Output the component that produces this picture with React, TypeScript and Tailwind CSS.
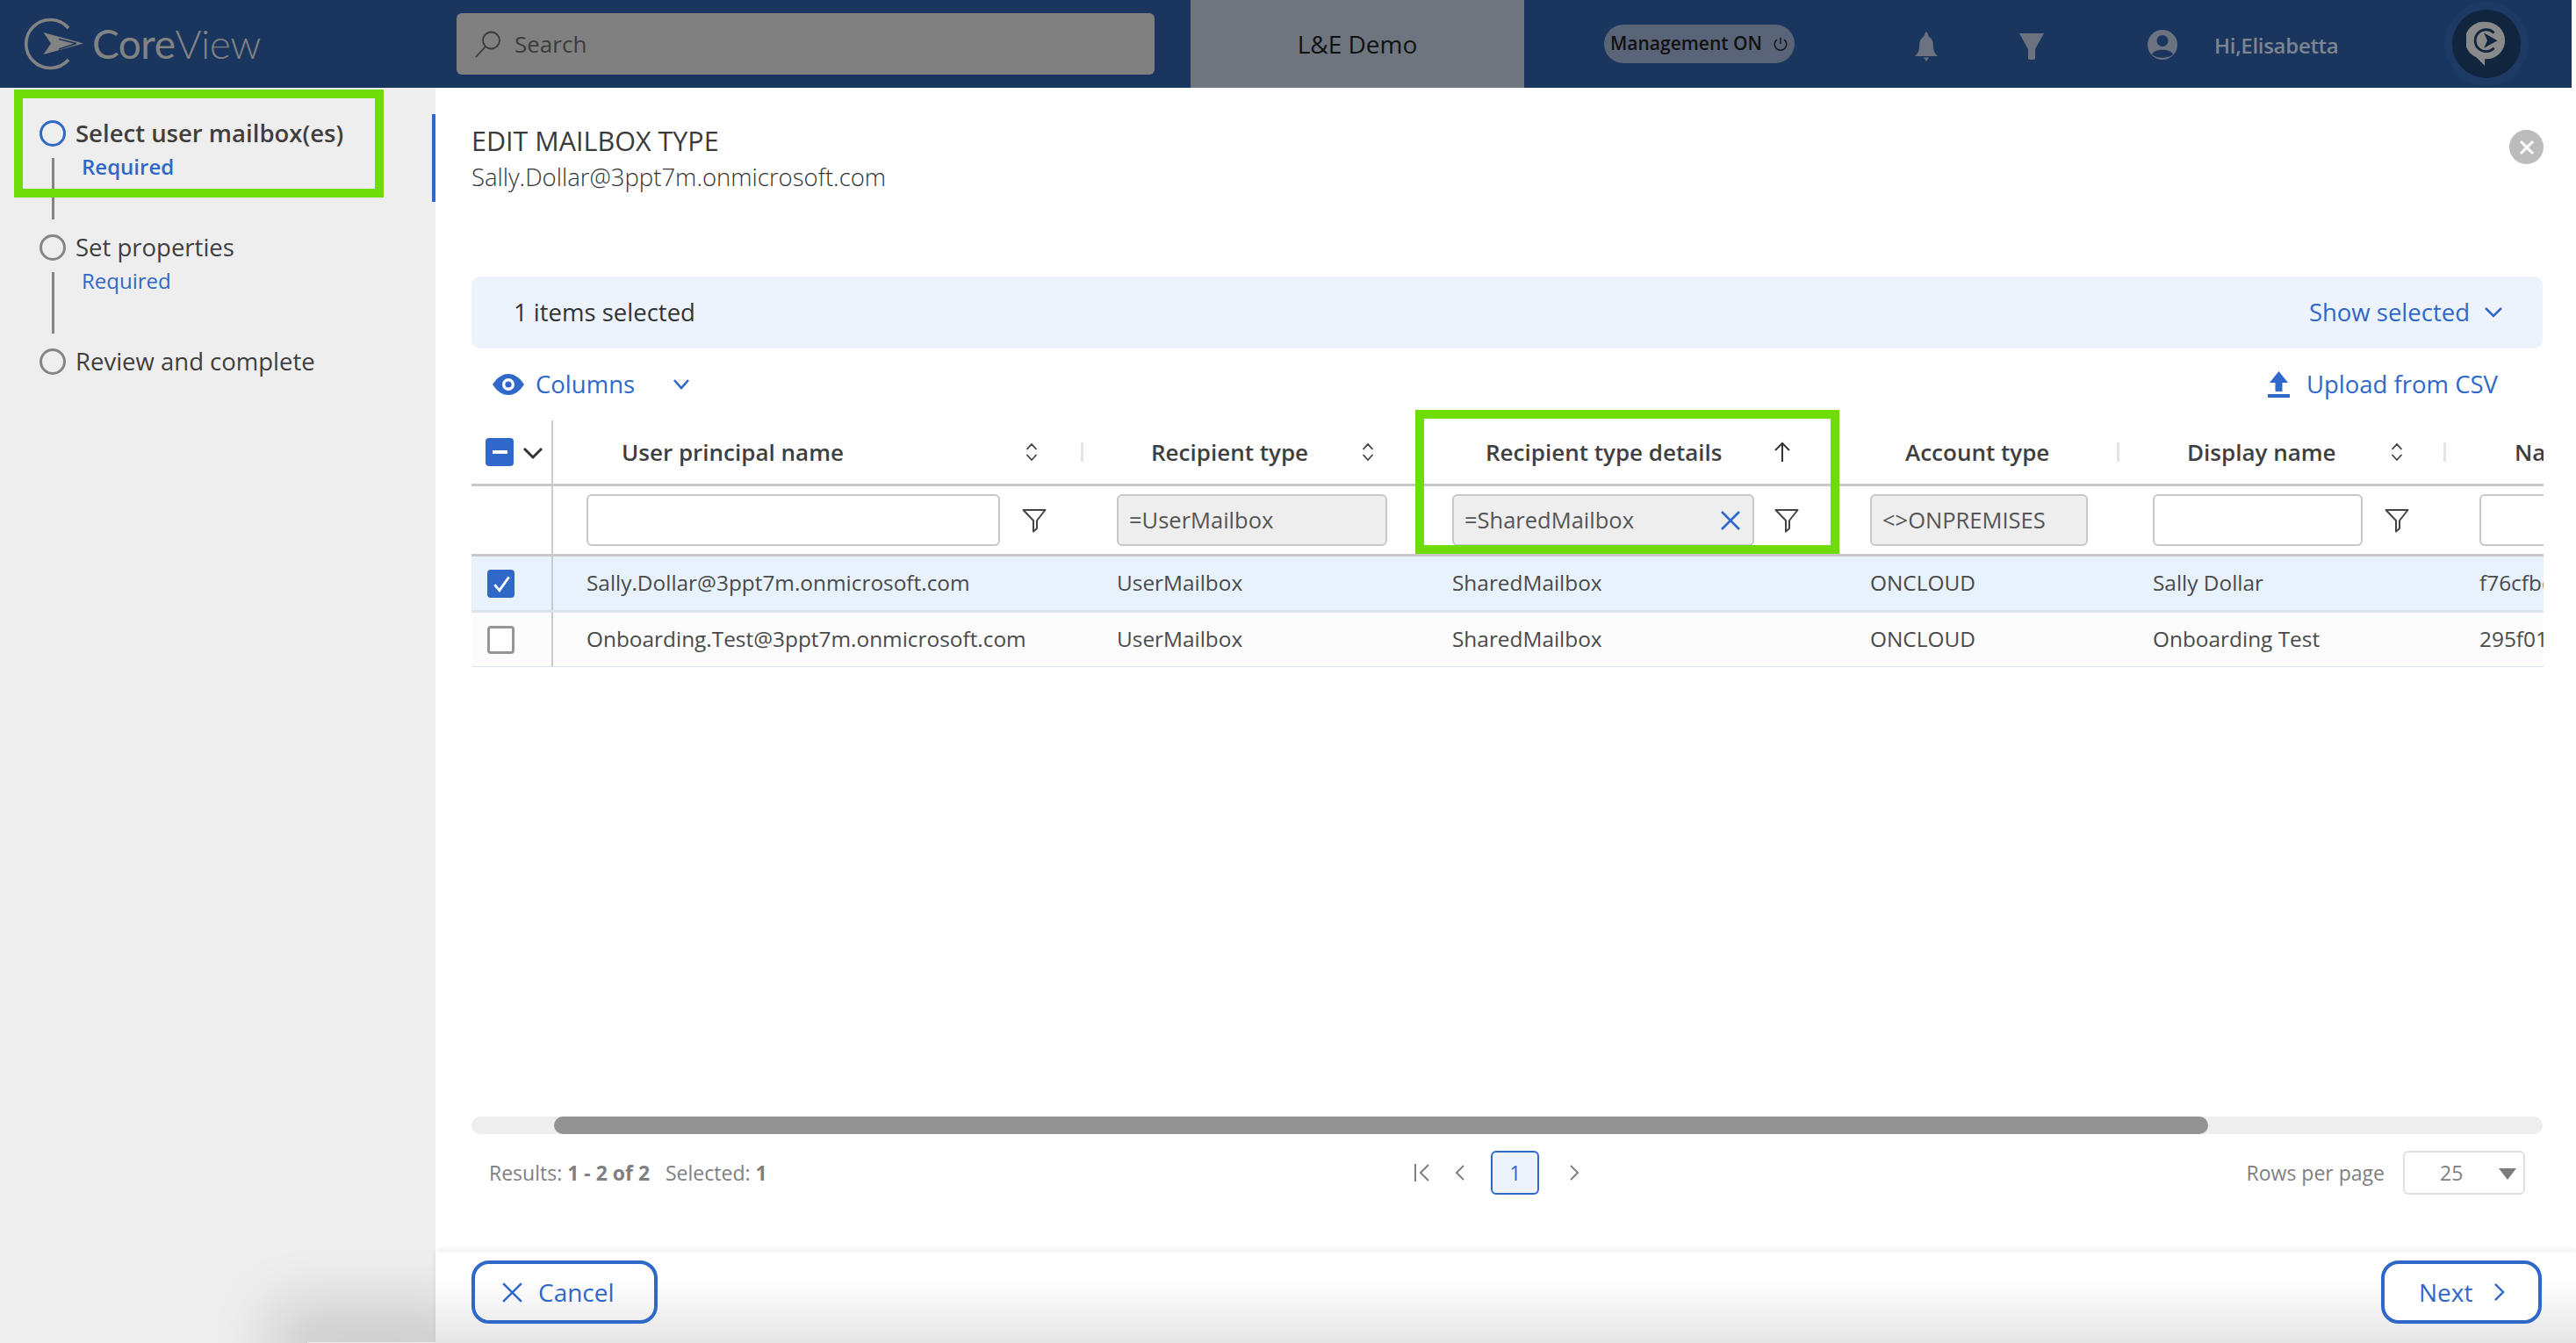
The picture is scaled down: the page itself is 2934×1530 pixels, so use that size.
import React from "react";

const Blue = "#2f68c8";

function LogoMark({ color = "#838383", cls = "" }: { color?: string; cls?: string }) {
  return (
    <svg viewBox="0 0 72 62" className={cls}>
      <path d="M52 13 A27.5 27.5 0 1 0 52 49" fill="none" stroke={color} strokeWidth="3.6" />
      <path d="M23.5 9 L69 21.5 L23.5 34 L32 21.5 Z" transform="translate(0 9)" fill={color} />
      <path d="M41 25.5 L61 30.5 M41 37 L61 30.5" stroke="#1a365f" strokeWidth="1.4" fill="none" />
    </svg>
  );
}

function Funnel() {
  return (
    <svg viewBox="0 0 28 28" className="w-[28px] h-[28px]" fill="none" stroke="#444" strokeWidth="2">
      <path d="M1.5 2 H26.5 L17 14 V23 L13 26.5 V14 Z" strokeLinejoin="round" />
    </svg>
  );
}

function Sort() {
  return (
    <svg viewBox="0 0 16 22" className="w-[16px] h-[22px]" fill="none" stroke="#444" strokeWidth="1.8">
      <path d="M2.5 8 L8 2 L13.5 8 M2.5 14 L8 20 L13.5 14" />
    </svg>
  );
}

function Sep() {
  return <div className="w-[3px] h-[22px] bg-[#e4e4e4]" />;
}

function Step({ title, active, required, strong }: { title: string; active?: boolean; required?: boolean; strong?: boolean }) {
  return (
    <div className="flex h-[130px]">
      <div className="flex flex-col items-center w-[30px]">
        <div className={`w-[30px] h-[30px] rounded-full border-[3px] shrink-0 ${active ? "border-[#2f68c8]" : "border-[#858585]"}`} />
        {required && <div className="w-[3px] h-[70px] mt-[13px] bg-[#858585]" />}
      </div>
      <div className="ml-[11px]">
        <div className={`h-[30px] leading-[30px] text-[27.5px] text-[#3f3f3f] whitespace-nowrap ${active ? "font-semibold" : "font-normal"}`}>{title}</div>
        {required && (
          <div className={`mt-[8px] ml-[7px] h-[30px] leading-[30px] text-[24px] text-[#2f68c8] ${strong ? "font-semibold" : "font-normal"}`}>Required</div>
        )}
      </div>
    </div>
  );
}

function HCell({ label, pl, gap, icon, sep }: { label: string; pl: string; gap?: string; icon?: React.ReactNode; sep?: boolean }) {
  return (
    <div className={`relative flex items-center h-full font-semibold text-[#3f3f3f] text-[26px] whitespace-nowrap ${pl}`}>
      <span>{label}</span>
      {icon && <span className={`flex ${gap}`}>{icon}</span>}
      {sep && <span className="absolute right-[10px] top-[25px]"><Sep /></span>}
    </div>
  );
}

function FCell({ pl, w, value, filter, funnelGap, clear }: { pl: string; w: string; value?: string; filter?: boolean; funnelGap?: string; clear?: boolean }) {
  return (
    <div className={`flex items-center h-full ${pl}`}>
      <div className={`relative h-[59px] rounded-[6px] border-2 border-[#c8c8c8] overflow-hidden shrink-0 flex items-center pl-[12px] text-[25.5px] text-[#555] whitespace-nowrap ${w} ${value ? "bg-[#eeeeee]" : "bg-white"}`}>
        {value}
        {clear && (
          <svg viewBox="0 0 24 24" className="absolute right-[13px] top-[16px] w-[24px] h-[24px]" fill="none" stroke="#2f68c8" strokeWidth="2.6">
            <path d="M2 2 L22 22 M22 2 L2 22" />
          </svg>
        )}
      </div>
      {filter && <span className={`flex ${funnelGap}`}><Funnel /></span>}
    </div>
  );
}

function Check({ on }: { on?: boolean }) {
  return on ? (
    <div className="w-[31px] h-[32px] rounded-[4px] bg-[#2f68c8] flex items-center justify-center">
      <svg viewBox="0 0 24 24" className="w-[26px] h-[26px]" fill="none" stroke="#fff" strokeWidth="2.6"><path d="M5 13 L10 19 L20 5" /></svg>
    </div>
  ) : (
    <div className="w-[31px] h-[32px] rounded-[4px] border-[3px] border-[#969696] bg-white" />
  );
}

const rowGrid = "grid grid-cols-[93px_614px_382px_476px_322px_372px_400px] w-[2659px]";

function Row({ vals, on }: { vals: string[]; on?: boolean }) {
  return (
    <div className={`${rowGrid} h-[64px] border-b-[3px] border-[#dde3ec] items-center text-[24.4px] text-[#4a4a4a] whitespace-nowrap ${on ? "bg-[#e8f2fd]" : "bg-[#fcfcfc]"}`}>
      <div className="h-full flex items-center justify-between pl-[18px] border-r-2 border-[#c8ccd2] box-border"><Check on={on} /></div>
      <div className="pl-[38px]">{vals[0]}</div>
      <div className="pl-[28px]">{vals[1]}</div>
      <div className="pl-[28px]">{vals[2]}</div>
      <div className="pl-[28px]">{vals[3]}</div>
      <div className="pl-[28px]">{vals[4]}</div>
      <div className="pl-[28px]">{vals[5]}</div>
    </div>
  );
}

export default function App() {
  return (
    <div className="relative w-[2934px] h-[1530px] overflow-hidden bg-white flex flex-col font-['Open_Sans',sans-serif]">
      {/* Header */}
      <header className="h-[100px] w-[2929px] shrink-0 bg-[#1a365f] flex items-center">
        <div className="w-[520px] shrink-0 flex items-center pl-[26px]">
          <LogoMark cls="w-[72px] h-[62px]" />
          <span className="ml-[7px] text-[46px] leading-none text-[#838383] font-['Lato',sans-serif] font-light tracking-[-0.5px]">
            <span className="font-normal">Core</span>View
          </span>
        </div>
        <div className="w-[795px] h-[70px] rounded-[6px] bg-[#808080] flex items-center pl-[20px] shrink-0">
          <svg viewBox="0 0 32 32" className="w-[32px] h-[32px]" fill="none" stroke="#3a3a3a" strokeWidth="1.8">
            <circle cx="19.5" cy="12" r="9.5" />
            <path d="M13 19 L2 31" />
          </svg>
          <span className="ml-[14px] text-[26px] text-[#3c3c3c]">Search</span>
        </div>
        <div className="ml-[41px] w-[380px] h-full bg-[#6e757e] flex items-center justify-center text-[28px] text-[#111] shrink-0">L&amp;E Demo</div>
        <div className="ml-[91px] w-[217px] h-[44px] rounded-full bg-[#5a6478] flex items-center justify-center text-[21px] font-semibold text-[#111] shrink-0 whitespace-nowrap">
          Management ON
          <svg viewBox="0 0 20 20" className="ml-[12px] w-[18px] h-[18px]" fill="none" stroke="#111" strokeWidth="1.6">
            <path d="M10 2 V10 M5.5 4.5 A7.5 7.5 0 1 0 14.5 4.5" />
          </svg>
        </div>
        <svg viewBox="0 0 28 34" className="ml-[136px] w-[28px] h-[34px] mt-[6px] shrink-0" fill="#6b7280">
          <path d="M14 0 C16 2 16 4 17 6 C21 8 22 12 22 18 C22 22 24 25 27 28 H1 C4 25 6 22 6 18 C6 12 7 8 11 6 C12 4 12 2 14 0 Z" />
          <path d="M11 29.5 H17 L14 34 Z" />
        </svg>
        <svg viewBox="0 0 28 30" className="ml-[92px] w-[28px] h-[30px] mt-[6px] shrink-0" fill="#6b7280">
          <path d="M0 0 H28 L18 18 V29 Q18 30 14 30 Q10 30 10 29 V18 Z" />
        </svg>
        <svg viewBox="0 0 34 34" className="ml-[118px] w-[34px] h-[34px] mt-[2px] shrink-0">
          <circle cx="17" cy="17" r="17" fill="#6b7280" />
          <circle cx="17" cy="12.5" r="6.5" fill="#1a365f" />
          <path d="M5 28 C8 21 26 21 29 28 C24 33 10 33 5 28 Z" fill="#1a365f" />
        </svg>
        <span className="ml-[42px] w-[143px] text-[24px] text-[#7d8590] font-semibold whitespace-nowrap mt-[4px] shrink-0 tracking-[-0.3px]">Hi,Elisabetta</span>
        <div className="ml-[128px] relative w-[78px] h-[78px] rounded-full bg-[#11253f] flex items-center justify-center shrink-0 shadow-[0_0_0_9px_#1c3a64]">
          <svg viewBox="0 0 48 56" className="w-[46px] h-[54px]">
            <path d="M24 2 A22 22 0 1 1 24 46 H22 V54 L12 44 A22 22 0 0 1 24 2 Z" fill="#8a8a8a" />
            <path d="M33 15 A13 13 0 1 0 33 33" fill="none" stroke="#11253f" strokeWidth="3" />
            <path d="M21 15 L37 24 L21 33 L25 24 Z" fill="#11253f" />
          </svg>
        </div>
      </header>

      {/* Body */}
      <div className="flex flex-1 min-h-0">
        <aside className="relative w-[496px] shrink-0 bg-[#eeeeee] pt-[37px] pl-[45px]">
          <Step title="Select user mailbox(es)" active required strong />
          <Step title="Set properties" required />
          <Step title="Review and complete" />
          <div className="absolute right-0 top-[30px] w-[4px] h-[100px] bg-[#2f68c8]" />
          <div className="absolute left-[16px] top-[2px] w-[421px] h-[123px] border-[10px] border-[#6fdc08]" />
          <div className="absolute left-[350px] right-0 bottom-0 h-[1px] shadow-[0_0_70px_40px_rgba(0,0,0,0.16)]" />
        </aside>

        <main className="relative flex-1 min-w-0 flex flex-col">
          <div className="flex-1 min-h-0 pl-[41px] pr-[38px] pt-[40px] flex flex-col">
            <div className="relative h-[175px] shrink-0">
              <div className="text-[30.5px] leading-[40px] text-[#3a3a3a] whitespace-nowrap">EDIT MAILBOX TYPE</div>
              <div className="text-[27.5px] leading-[40px] mt-[2px] font-light text-[#333] whitespace-nowrap">Sally.Dollar@3ppt7m.onmicrosoft.com</div>
              <div className="absolute right-[-1px] top-[8px] w-[39px] h-[39px] rounded-full bg-[#bcbcbc] flex items-center justify-center">
                <svg viewBox="0 0 20 20" className="w-[20px] h-[20px]" fill="none" stroke="#fff" strokeWidth="3"><path d="M3 3 L17 17 M17 3 L3 17" /></svg>
              </div>
            </div>

            <div className="h-[82px] shrink-0 rounded-[10px] bg-[#edf3fd] flex items-center justify-between pl-[48px] pr-[45px]">
              <span className="text-[27.5px] text-[#333]">1 items selected</span>
              <span className="flex items-center text-[27.5px] text-[#2f68c8]">
                Show selected
                <svg viewBox="0 0 22 14" className="ml-[16px] w-[22px] h-[14px]" fill="none" stroke="#2f68c8" strokeWidth="2.6"><path d="M2 2 L11 11 L20 2" /></svg>
              </span>
            </div>

            <div className="h-[82px] shrink-0 flex items-center justify-between pl-[24px] pr-[51px] text-[27.5px] text-[#2f68c8]">
              <div className="flex items-center">
                <svg viewBox="0 0 36 24" className="w-[36px] h-[24px]">
                  <path d="M0 12 C6 3 12 0 18 0 C24 0 30 3 36 12 C30 21 24 24 18 24 C12 24 6 21 0 12 Z" fill="#2f68c8" />
                  <circle cx="18" cy="12" r="7" fill="#fff" />
                  <circle cx="18" cy="12" r="3.6" fill="#2f68c8" />
                </svg>
                <span className="ml-[13px]">Columns</span>
                <svg viewBox="0 0 20 14" className="ml-[43px] w-[20px] h-[14px]" fill="none" stroke="#2f68c8" strokeWidth="2.6"><path d="M2 2 L10 11 L18 2" /></svg>
              </div>
              <div className="flex items-center">
                <svg viewBox="0 0 25 30" className="w-[25px] h-[30px]" fill="#2f68c8">
                  <path d="M12.5 0 L23 13 H16.5 V23 H8.5 V13 H2 Z" />
                  <rect x="0" y="26" width="25" height="4" />
                </svg>
                <span className="ml-[19px]">Upload from CSV</span>
              </div>
            </div>

            {/* Table */}
            <div className="relative w-[2360px] h-[281px] overflow-hidden shrink-0">
              <div className={`${rowGrid} h-[75px] border-b-[3px] border-[#c8c8c8]`}>
                <div className="flex items-center pl-[16px] border-r-2 border-[#c8ccd2] h-full">
                  <div className="w-[32px] h-[32px] rounded-[4px] bg-[#2f68c8] flex items-center justify-center">
                    <div className="w-[17px] h-[4px] bg-white" />
                  </div>
                  <svg viewBox="0 0 24 16" className="ml-[10px] mt-[2px] w-[24px] h-[16px]" fill="none" stroke="#333" strokeWidth="3"><path d="M2 3 L12 13 L22 3" /></svg>
                </div>
                <HCell label="User principal name" pl="pl-[78px]" gap="ml-[206px]" icon={<Sort />} sep />
                <HCell label="Recipient type" pl="pl-[67px]" gap="ml-[60px]" icon={<Sort />} />
                <HCell label="Recipient type details" pl="pl-[66px]" gap="ml-[58px]" icon={
                  <svg viewBox="0 0 20 24" className="w-[20px] h-[24px]" fill="none" stroke="#333" strokeWidth="2"><path d="M10 23 V2 M2 10 L10 2 L18 10" /></svg>
                } />
                <HCell label="Account type" pl="pl-[68px]" sep />
                <HCell label="Display name" pl="pl-[67px]" gap="ml-[61px]" icon={<Sort />} sep />
                <HCell label="Name" pl="pl-[68px]" />
              </div>

              <div className={`${rowGrid} h-[80px] border-b-[3px] border-[#c8c8c8]`}>
                <div className="border-r-2 border-[#c8ccd2] h-full" />
                <FCell pl="pl-[38px]" w="w-[471px]" filter funnelGap="ml-[25px]" />
                <FCell pl="pl-[28px]" w="w-[308px]" value="=UserMailbox" />
                <FCell pl="pl-[28px]" w="w-[344px]" value="=SharedMailbox" filter funnelGap="ml-[23px]" clear />
                <FCell pl="pl-[28px]" w="w-[248px]" value="<>ONPREMISES" />
                <FCell pl="pl-[28px]" w="w-[239px]" filter funnelGap="ml-[25px]" />
                <FCell pl="pl-[28px]" w="w-[239px]" />
              </div>

              <Row on vals={["Sally.Dollar@3ppt7m.onmicrosoft.com", "UserMailbox", "SharedMailbox", "ONCLOUD", "Sally Dollar", "f76cfbd0-7a2e"]} />
              <Row vals={["Onboarding.Test@3ppt7m.onmicrosoft.com", "UserMailbox", "SharedMailbox", "ONCLOUD", "Onboarding Test", "295f01a4-3e1b"]} />
            </div>

            {/* Scrollbar */}
            <div className="mt-[512px] h-[20px] shrink-0 rounded-full bg-[#eeeeee] pl-[94px] pr-[381px]">
              <div className="h-full rounded-full bg-[#939393]" />
            </div>

            {/* Pagination */}
            <div className="mt-[19px] h-[50px] shrink-0 grid grid-cols-3 items-center text-[23px] text-[#7f7f7f]">
              <div className="pl-[20px] whitespace-nowrap">
                Results: <b className="font-bold">1 - 2 of 2</b>&nbsp;&nbsp;&nbsp;Selected: <b className="font-bold">1</b>
              </div>
              <div className="flex items-center pl-[287px]">
                <svg viewBox="0 0 20 22" className="w-[20px] h-[22px]" fill="none" stroke="#7f7f7f" strokeWidth="2"><path d="M2 1 V21 M17 2 L8 11 L17 20" /></svg>
                <svg viewBox="0 0 12 20" className="ml-[27px] w-[12px] h-[20px]" fill="none" stroke="#7f7f7f" strokeWidth="2"><path d="M10 2 L2 10 L10 18" /></svg>
                <div className="ml-[29px] w-[55px] h-[50px] rounded-[6px] border-2 border-[#2f68c8] bg-[#edf3fd] flex items-center justify-center text-[#2f68c8]">1</div>
                <svg viewBox="0 0 12 20" className="ml-[34px] w-[12px] h-[20px]" fill="none" stroke="#7f7f7f" strokeWidth="2"><path d="M2 2 L10 10 L2 18" /></svg>
              </div>
              <div className="flex items-center justify-end pr-[20px]">
                <span>Rows per page</span>
                <div className="ml-[21px] relative w-[139px] h-[50px] rounded-[6px] border-2 border-[#e0e0e0] pl-[40px] flex items-center">
                  25
                  <div className="absolute right-[8px] top-[18px] w-0 h-0 border-l-[10px] border-r-[10px] border-t-[13px] border-l-transparent border-r-transparent border-t-[#7a7a7a]" />
                </div>
              </div>
            </div>
          </div>

          {/* Footer */}
          <footer className="relative h-[104px] shrink-0 pl-[41px] pr-[39px] flex items-center justify-between bg-gradient-to-b from-white from-30% to-[#e6e6e6] shadow-[0_-2px_6px_rgba(0,0,0,0.08)]">
            <button className="w-[212px] h-[72px] -mt-[12px] rounded-[20px] border-[4px] border-[#2f68c8] flex items-center pl-[30px] text-[28px] text-[#2f68c8]">
              <svg viewBox="0 0 24 24" className="w-[25px] h-[25px]" fill="none" stroke="#2f68c8" strokeWidth="2.4"><path d="M2 2 L22 22 M22 2 L2 22" /></svg>
              <span className="ml-[17px]">Cancel</span>
            </button>
            <button className="w-[183px] h-[72px] -mt-[12px] rounded-[20px] border-[4px] border-[#2f68c8] bg-white flex items-center pl-[39px] text-[28px] text-[#2f68c8]">
              <span>Next</span>
              <svg viewBox="0 0 14 24" className="ml-[24px] w-[13px] h-[22px]" fill="none" stroke="#2f68c8" strokeWidth="2.6"><path d="M2 2 L12 12 L2 22" /></svg>
            </button>
          </footer>

          <div className="absolute left-[1116px] top-[367px] w-[483px] h-[164px] border-[10px] border-[#6fdc08]" />
        </main>
      </div>
    </div>
  );
}
